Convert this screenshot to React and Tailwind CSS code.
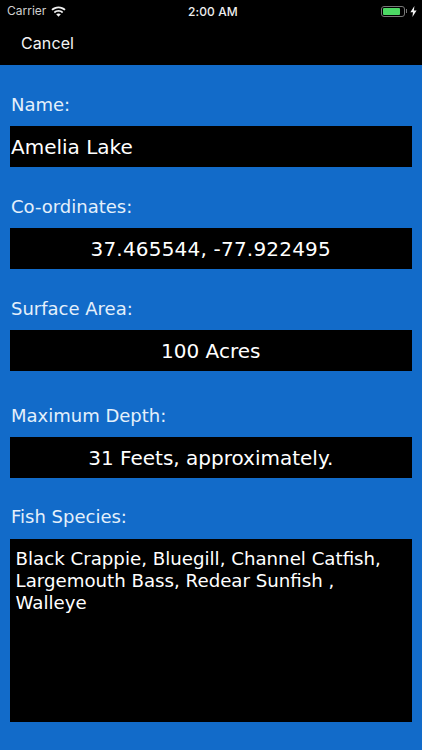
import React from "react";

const labelClass = "h-6 text-[18px] leading-6 text-[#e4f0fb]";
const boxClass = "h-[41px] bg-black text-[20px] leading-[43px] text-white";

const Field = ({ label, value, className, valueClass = "" }) => (
  <div className={className}>
    <div className={`pl-[1px] ${labelClass}`}>{label}</div>
    <div className={`mt-[9px] text-center ${boxClass} ${valueClass}`}>{value}</div>
  </div>
);

export default function App() {
  return (
    <div className="flex h-[750px] w-[422px] flex-col overflow-hidden bg-[#126bc9] font-['DejaVu_Sans',sans-serif]">
      <div className="h-[65px] shrink-0 bg-black text-white">
        <div className="relative flex h-[22px] items-center justify-between pl-[7px] pr-[5px] font-['Inter',sans-serif] text-[12px]">
          <div className="flex items-center gap-[5px] text-[#d0d0d0]">
            <span>Carrier</span>
            <svg width="15" height="11" viewBox="0 0 15 11" fill="#f2f2f2">
              <path d="M7.5 0.5C4.8 0.5 2.3 1.5 0.4 3.3L1.6 4.6C3.2 3.1 5.3 2.2 7.5 2.2s4.3 0.9 5.9 2.4l1.2-1.3C12.7 1.5 10.2 0.5 7.5 0.5z" />
              <path d="M7.5 4C5.7 4 4 4.7 2.8 5.9L4 7.2C4.9 6.3 6.2 5.8 7.5 5.8s2.6 0.5 3.5 1.4l1.2-1.3C11 4.7 9.3 4 7.5 4z" />
              <path d="M7.5 7.4c-0.9 0-1.7 0.3-2.3 0.9l2.3 2.4 2.3-2.4C9.2 7.7 8.4 7.4 7.5 7.4z" />
            </svg>
          </div>
          <span className="absolute left-[188px] top-[3px] font-medium tracking-[0.1px] text-[#eeeeee]">2:00 AM</span>
          <div className="flex items-center gap-[1px]">
            <div className="flex h-[11px] w-[24px] items-center rounded-[3px] border border-[#777] p-[1px]">
              <div className="h-full w-[17px] rounded-[1px] bg-[#4cd964]" />
            </div>
            <div className="h-[4px] w-[1px] bg-[#777]" />
            <svg width="7" height="11" viewBox="0 0 7 11" fill="#f2f2f2" className="ml-[2px]">
              <path d="M4.4 0L0.4 6.2H3L2.4 11L6.6 4.4H3.9z" />
            </svg>
          </div>
        </div>
        <div className="pl-[21px] pt-[10px] font-['Inter',sans-serif] text-[16px] leading-[22px] tracking-[0.1px] text-[#f4f4f4]">Cancel</div>
      </div>

      <div className="flex grow flex-col pl-[10px] pr-[10.5px] pt-[28px]">
        <div className={`pl-[1px] ${labelClass}`}>Name:</div>
        <div className={`mt-[9px] pl-[1px] ${boxClass}`}>Amelia Lake</div>
        <Field label="Co-ordinates:" value="37.465544, -77.922495" className="mt-[28px]" valueClass="tracking-[0.2px]" />
        <Field label="Surface Area:" value="100 Acres" className="mt-[28px]" />
        <Field label="Maximum Depth:" value="31 Feets, approximately." className="mt-[33px]" />
        <div className={`mt-[27px] pl-[1px] ${labelClass}`}>Fish Species:</div>
        <div className="mt-[10px] h-[183px] bg-black px-[5.5px] pt-[9px] text-[18.2px] leading-[22px] text-white">
          Black Crappie, Bluegill, Channel Catfish, Largemouth Bass, Redear Sunfish , Walleye
        </div>
      </div>
    </div>
  );
}
